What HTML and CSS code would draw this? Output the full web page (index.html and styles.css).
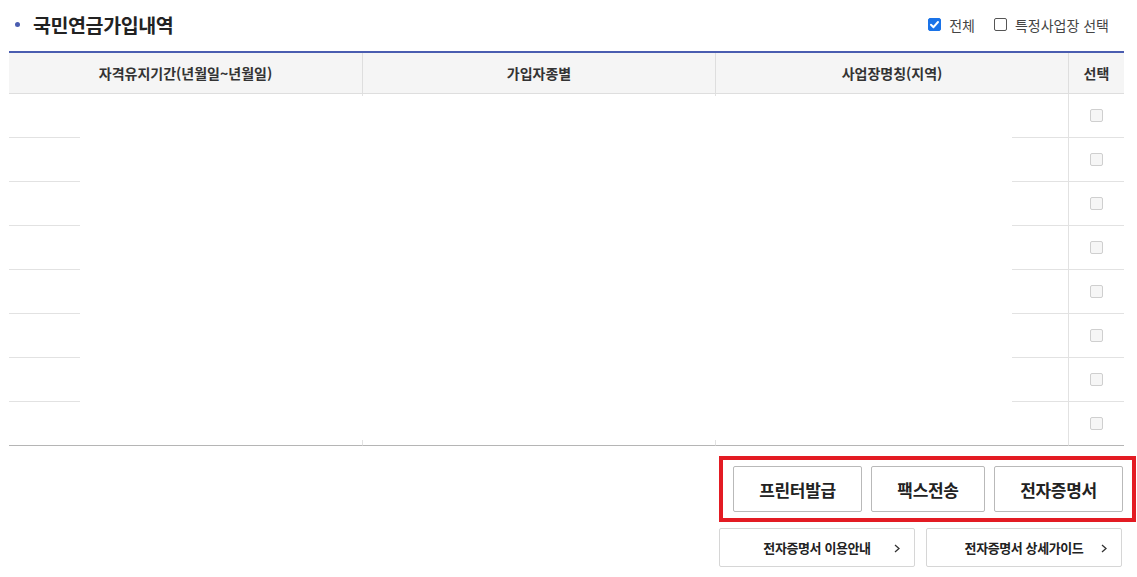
FILE: index.html
```html
<!DOCTYPE html>
<html lang="ko">
<head>
<meta charset="utf-8">
<title>국민연금가입내역</title>
<link rel="stylesheet" href="styles.css">
</head>
<body>
<div class="page">
  <div class="titlebar">
    <h2 class="title"><span class="dot"></span>국민연금가입내역</h2>
    <div class="opts">
      <label class="opt"><span class="cb checked"><svg viewBox="0 0 13 13" width="13" height="13"><path d="M3 6.8 L5.5 9.2 L10 4" fill="none" stroke="#fff" stroke-width="2" stroke-linecap="round" stroke-linejoin="round"/></svg></span>전체</label>
      <label class="opt"><span class="cb"></span>특정사업장 선택</label>
    </div>
  </div>
  <div class="tablewrap">
    <div class="grid">
      <div class="th">자격유지기간(년월일~년월일)</div>
      <div class="th">가입자종별</div>
      <div class="th">사업장명칭(지역)</div>
      <div class="th last">선택</div>
      <div class="td"></div><div class="td"></div><div class="td"></div><div class="td last"><span class="dcb"></span></div>
      <div class="td"></div><div class="td"></div><div class="td"></div><div class="td last"><span class="dcb"></span></div>
      <div class="td"></div><div class="td"></div><div class="td"></div><div class="td last"><span class="dcb"></span></div>
      <div class="td"></div><div class="td"></div><div class="td"></div><div class="td last"><span class="dcb"></span></div>
      <div class="td"></div><div class="td"></div><div class="td"></div><div class="td last"><span class="dcb"></span></div>
      <div class="td"></div><div class="td"></div><div class="td"></div><div class="td last"><span class="dcb"></span></div>
      <div class="td"></div><div class="td"></div><div class="td"></div><div class="td last"><span class="dcb"></span></div>
      <div class="td end"></div><div class="td end"></div><div class="td end"></div><div class="td last end"><span class="dcb"></span></div>
    </div>
    <div class="mask"></div>
  </div>
  <div class="actions">
    <div class="redbox">
      <button class="btn w130">프린터발급</button>
      <button class="btn w115">팩스전송</button>
      <button class="btn w130">전자증명서</button>
    </div>
    <div class="guides">
      <a class="guide">전자증명서 이용안내<svg class="chev" viewBox="0 0 6 9" width="6" height="9"><path d="M1 1 L5 4.5 L1 8" fill="none" stroke="#333" stroke-width="1.3"/></svg></a>
      <a class="guide">전자증명서 상세가이드<svg class="chev" viewBox="0 0 6 9" width="6" height="9"><path d="M1 1 L5 4.5 L1 8" fill="none" stroke="#333" stroke-width="1.3"/></svg></a>
    </div>
  </div>
</div>
</body>
</html>
```
FILE: styles.css
```css
* { box-sizing: border-box; }
html, body { margin: 0; padding: 0; background: #fff; }
body {
  font-family: "Noto Sans CJK KR", "Noto Sans", sans-serif;
  color: #333;
  width: 1137px;
  height: 577px;
  overflow: hidden;
}
.page { padding-left: 9px; width: 1137px; }
.titlebar {
  width: 1115px;
  height: 51px;
  display: flex;
  align-items: center;
  justify-content: space-between;
  padding-bottom: 2px;
}
.title {
  margin: 0;
  font-size: 19.5px;
  font-weight: 700;
  color: #222;
  display: flex;
  align-items: center;
  letter-spacing: -0.4px;
}
.dot {
  width: 5px; height: 5px; border-radius: 50%;
  background: #4a5db0;
  margin: 0 13px 0 6px;
}
.opts { display: flex; align-items: center; gap: 19px; padding-right: 15px; font-size: 14px; color: #444; }
.opt { display: flex; align-items: center; gap: 8px; }
.cb {
  width: 13px; height: 13px; border: 1px solid #555; border-radius: 2px; background: #fff;
  display: inline-flex;
}
.cb.checked { background: #1a73e8; border-color: #1a73e8; }
.cb svg { display: block; margin: -1px; }

.tablewrap { position: relative; width: 1115px; }
.grid {
  display: grid;
  grid-template-columns: 354px 353px 353px 55px;
  border-top: 2px solid #4a5db0;
}
.th {
  height: 41px;
  background: #f5f5f5;
  border-bottom: 1px solid #dedede;
  border-right: 1px solid #dedede;
  display: flex; align-items: center; justify-content: center;
  font-size: 14px; font-weight: 700; color: #333;
}
.td {
  height: 44px;
  border-bottom: 1px solid #e2e2e2;
  border-right: 1px solid #e2e2e2;
  display: flex; align-items: center; justify-content: center;
}
.last { border-right: none; }
.td.end { border-bottom: 1px solid #b5b5b5; }
.dcb {
  width: 13px; height: 13px;
  border: 1px solid #cfcfcf; border-radius: 2px; background: #f6f6f6;
  margin-bottom: 1px;
}
.mask {
  position: absolute;
  left: 71px; top: 45px;
  width: 932px; height: 344px;
  background: #fff;
}
.actions {
  display: flex; flex-direction: column; align-items: flex-start;
  padding-left: 710px; padding-top: 10px;
}
.redbox {
  display: flex; gap: 9px;
  border: 4px solid #e31b23;
  padding: 6px 9px 6px 10px;
  width: 417px;
}
.btn {
  height: 46px;
  background: #fff;
  border: 1px solid #b9b9b9;
  border-radius: 2px;
  font-family: inherit;
  font-size: 17px; font-weight: 700; color: #222;
  padding: 0;
  letter-spacing: -0.3px;
}
.w130 { width: 130px; }
.w115 { width: 115px; }
.guides { display: flex; gap: 11px; margin-top: 6px; }
.guide {
  position: relative;
  width: 196px; height: 39px;
  border: 1px solid #d6d6d6; border-radius: 2px;
  display: flex; align-items: center; justify-content: center;
  font-size: 13px; font-weight: 700; color: #222;
  letter-spacing: -0.4px;
}
.chev { position: absolute; right: 14px; top: 15px; }
```
